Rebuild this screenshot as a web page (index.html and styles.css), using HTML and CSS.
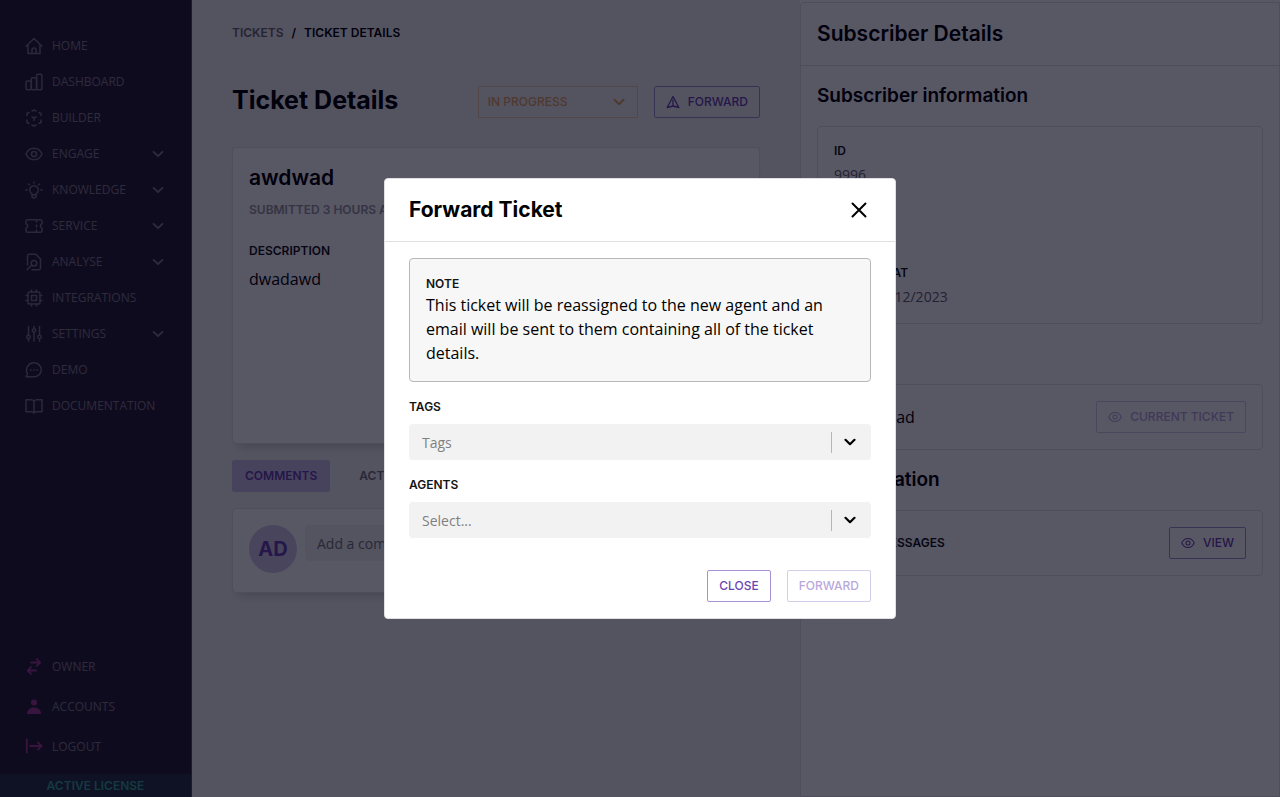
FILE: index.html
```html
<!DOCTYPE html>
<html lang="en">
<head>
<meta charset="utf-8">
<meta name="viewport" content="width=device-width, initial-scale=1">
<title>Ticket Details</title>
<link rel="stylesheet" href="styles.css">
</head>
<body>
<svg class="sprite" aria-hidden="true">
  <symbol id="chevron" viewBox="0 0 12 12"><path d="M1.500 3.800 6 8.200l4.500-4.400"/></symbol>
  <symbol id="eye" viewBox="0 0 18 18"><path d="M1 9c1.500-3.500 4.600-5.800 8-5.800S15.500 5.500 17 9c-1.500 3.500-4.600 5.800-8 5.800S2.500 12.500 1 9Z"/><circle cx="9" cy="9" r="2.600"/></symbol>
</svg>
<div class="app">
  <aside class="sidebar">
    <nav class="nav">
      <a class="nav-item" href="#"><svg class="icon" viewBox="0 0 18 18"><path d="M1 9.200 9 1.500l8 7.700M3 7.500V16.500h12V7.500M7 16.500v-3.500a2 2 0 0 1 4 0v3.500"/></svg><span>HOME</span></a>
      <a class="nav-item" href="#"><svg class="icon" viewBox="0 0 18 18"><rect x="1" y="8" width="5.300" height="8.700" rx="1.200"/><rect x="6.300" y="4.800" width="5.300" height="11.900" rx="1.200"/><rect x="11.600" y="1.200" width="5.300" height="15.500" rx="1.200"/></svg><span>DASHBOARD</span></a>
      <a class="nav-item" href="#"><svg class="icon" viewBox="0 0 18 18"><path d="M7 2 9 1l2 1M14 3.500l2 1v2M16 11v2.500l-2 1M11 16l-2 1-2-1M4 14.500l-2-1V11M2 6.500v-2l2-1M7 7.800l2 1.200 2-1.200M9 9v2.500"/></svg><span>BUILDER</span></a>
      <a class="nav-item" href="#"><svg class="icon"><use href="#eye"/></svg><span>ENGAGE</span><svg class="chevron"><use href="#chevron"/></svg></a>
      <a class="nav-item" href="#"><svg class="icon" viewBox="0 0 18 18"><path d="M7 12.800a4.300 4.300 0 1 1 4 0v2.700a1.200 1.200 0 0 1-1.200 1.200H8.200A1.200 1.200 0 0 1 7 15.500ZM7 13.800h4M9 1v1M3.500 3l.8.8M14.500 3l-.8.8M.8 9h1.400M15.800 9h1.400"/></svg><span>KNOWLEDGE</span><svg class="chevron"><use href="#chevron"/></svg></a>
      <a class="nav-item" href="#"><svg class="icon" viewBox="0 0 18 18"><path d="M2.500 2.800h13A1.500 1.500 0 0 1 17 4.300v2.500a2.300 2.300 0 0 0 0 4.400v2.500a1.500 1.500 0 0 1-1.500 1.500h-13A1.500 1.500 0 0 1 1 13.700v-2.500a2.300 2.300 0 0 0 0-4.400V4.300a1.500 1.500 0 0 1 1.500-1.500ZM11.500 3v2M11.500 8v2M11.500 13v2"/></svg><span>SERVICE</span><svg class="chevron"><use href="#chevron"/></svg></a>
      <a class="nav-item" href="#"><svg class="icon" viewBox="0 0 18 18"><path d="M2.500 12V3A1.700 1.700 0 0 1 4.200 1.200h6.500L15.500 6v9a1.700 1.700 0 0 1-1.700 1.700H7M2 16.800l4.700-4.500"/><circle cx="9" cy="10.300" r="2.800"/></svg><span>ANALYSE</span><svg class="chevron"><use href="#chevron"/></svg></a>
      <a class="nav-item" href="#"><svg class="icon" viewBox="0 0 18 18"><rect x="3" y="3" width="12" height="12" rx="1.800"/><rect x="6.500" y="6.500" width="5" height="5"/><path d="M6.500 1v2M11.500 1v2M6.500 15v2M11.500 15v2M1 6.500h2M1 11.500h2M15 6.500h2M15 11.500h2"/></svg><span>INTEGRATIONS</span></a>
      <a class="nav-item" href="#"><svg class="icon" viewBox="0 0 18 18"><circle cx="3.500" cy="12" r="1.700"/><circle cx="9" cy="5.500" r="1.700"/><circle cx="14.500" cy="12" r="1.700"/><path d="M3.500 1.500v8.800M3.500 13.700v2.500M9 1.500v2.300M9 7.200v9M14.500 1.500v8.800M14.500 13.700v2.500"/></svg><span>SETTINGS</span><svg class="chevron"><use href="#chevron"/></svg></a>
      <a class="nav-item" href="#"><svg class="icon" viewBox="0 0 18 18"><path d="M1 15.800 2.500 13C0 8.500 2.500 1.800 9.200 1.800a7 7 0 0 1 0 14ZM5.500 9h.6M8.800 9h.6M12 9h.6"/></svg><span>DEMO</span></a>
      <a class="nav-item" href="#"><svg class="icon" viewBox="0 0 18 18"><path d="M9 4.500C8.500 3.300 7.500 2.800 6 2.800H1v12h5.500c1.300 0 2.200.4 2.500 1.200.3-.8 1.200-1.200 2.500-1.200H17v-12h-5c-1.500 0-2.500.5-3 1.700ZM9 4.500V16"/></svg><span>DOCUMENTATION</span></a>
    </nav>
    <nav class="nav nav-user">
      <a class="nav-item" href="#"><svg class="icon" viewBox="0 0 18 18"><path d="M6 4.500h9M11.800 1.200l3.300 3.300-3.300 3.300M11 12.500H2.800M6 9.200l-3.300 3.300L6 15.800"/></svg><span>OWNER</span></a>
      <a class="nav-item" href="#"><svg class="icon solid" viewBox="0 0 18 18"><circle cx="9" cy="4.500" r="3"/><path d="M2 16c0-4 3-6.500 7-6.500s7 2.500 7 6.500Z"/></svg><span>ACCOUNTS</span></a>
      <a class="nav-item" href="#"><svg class="icon" viewBox="0 0 18 18"><path d="M1.800 1.500v13M5 8h11.500M13 4.500 16.500 8 13 11.500"/></svg><span>LOGOUT</span></a>
    </nav>
    <div class="license">ACTIVE LICENSE</div>
  </aside>

  <main class="main">
    <nav class="breadcrumb"><a href="#">TICKETS</a><span>/</span><span>TICKET DETAILS</span></nav>
    <div class="title-row">
      <h1>Ticket Details</h1>
      <div class="status">
        <select aria-label="Status"><option>IN PROGRESS</option></select>
        <svg class="chevron"><use href="#chevron"/></svg>
      </div>
      <button class="btn" type="button"><svg class="btn-icon" viewBox="0 0 14 14"><path d="M7 1.500 1.200 12.500 7 11l5.800 1.500ZM7 5v6"/></svg>FORWARD</button>
    </div>
    <section class="card ticket">
      <h2>awdwad</h2>
      <p class="submitted">SUBMITTED 3 HOURS AGO</p>
      <h3 class="label">DESCRIPTION</h3>
      <p class="text">dwadawd</p>
    </section>
    <div class="tabs" role="tablist">
      <button class="tab active" type="button" role="tab" aria-selected="true">COMMENTS</button>
      <button class="tab" type="button" role="tab" aria-selected="false">ACTIVITY</button>
    </div>
    <section class="card comment">
      <div class="avatar">AD</div>
      <input type="text" placeholder="Add a comment" aria-label="Add a comment">
    </section>
  </main>

  <aside class="details">
    <header class="details-head"><h2>Subscriber Details</h2></header>
    <div class="details-body">
      <h2>Subscriber information</h2>
      <dl class="box info">
        <div><dt class="label">ID</dt><dd>9996</dd></div>
        <div><dt class="label">NAME</dt><dd>User</dd></div>
        <div><dt class="label">CREATED AT</dt><dd>09:14 12/12/2023</dd></div>
      </dl>
      <h2>Tickets</h2>
      <div class="box row">
        <span class="text">awdwadad</span>
        <button class="btn muted" type="button" disabled><svg class="btn-icon"><use href="#eye"/></svg>CURRENT TICKET</button>
      </div>
      <h2>Conversation</h2>
      <div class="box row">
        <span class="label">AGENT MESSAGES</span>
        <button class="btn" type="button"><svg class="btn-icon"><use href="#eye"/></svg>VIEW</button>
      </div>
    </div>
  </aside>
</div>

<div class="overlay">
  <form class="modal" role="dialog" aria-modal="true" aria-labelledby="modal-title">
    <header class="modal-head">
      <h2 id="modal-title">Forward Ticket</h2>
      <button class="close" type="button" aria-label="Close dialog"><svg viewBox="0 0 16 16"><path d="M1.500 1.500l13 13M14.500 1.500l-13 13"/></svg></button>
    </header>
    <div class="modal-body">
      <div class="note">
        <h3 class="label">NOTE</h3>
        <p>This ticket will be reassigned to the new agent and an email will be sent to them containing all of the ticket details.</p>
      </div>
      <label class="label" for="tags">TAGS</label>
      <div class="field">
        <select id="tags"><option>Tags</option></select>
        <span class="divider"></span>
        <svg class="chevron"><use href="#chevron"/></svg>
      </div>
      <label class="label" for="agents">AGENTS</label>
      <div class="field">
        <select id="agents"><option>Select...</option></select>
        <span class="divider"></span>
        <svg class="chevron"><use href="#chevron"/></svg>
      </div>
      <div class="actions">
        <button class="btn" type="button">CLOSE</button>
        <button class="btn muted" type="submit" disabled>FORWARD</button>
      </div>
    </div>
  </form>
</div>
</body>
</html>
```
FILE: styles.css
```css
:root {
  --display: Inter, "Liberation Sans", sans-serif;
  --text: "Open Sans", "Noto Sans", sans-serif;
  --purple: #6a45b0;
  --line: #e2e0e6;
}

* { box-sizing: border-box; }

body {
  margin: 0;
  font-family: var(--text);
  color: #000;
}

h1, h2, h3, p, dl, dd { margin: 0; }
a { color: inherit; text-decoration: none; }
button, input, select { margin: 0; font: inherit; }
select { appearance: none; border: 0; background: transparent; opacity: 1; }
svg { fill: none; stroke: currentColor; stroke-linecap: round; stroke-linejoin: round; flex: none; }
.sprite { display: none; }

.app {
  display: grid;
  grid-template-columns: 192px minmax(0, 608fr) minmax(0, 480fr);
  min-height: 100vh;
}

/* Sidebar */
.sidebar {
  display: flex;
  flex-direction: column;
  padding-top: 28px;
  background: #2a2036;
  border-right: 1px solid #55505f;
}

.nav-item {
  display: flex;
  align-items: center;
  gap: 9px;
  height: 36px;
  padding: 0 27px 0 25px;
  font-size: 12px;
  line-height: 18px;
  color: #847f88;
}

.icon { width: 18px; height: 18px; stroke-width: 1.500; color: #7a7580; }
.chevron { width: 12px; height: 12px; stroke-width: 1.800; }
.nav .chevron { margin-left: auto; }
.nav-user { margin-top: auto; padding-bottom: 7px; }
.nav-user .nav-item { height: 40px; }
.nav-user .icon { color: #a03f92; stroke-width: 1.800; }
.icon.solid { fill: currentColor; stroke: none; }

.license {
  padding: 3px 0;
  background: #2a3444;
  color: #38a898;
  font: 600 12px/17px var(--display);
  text-align: center;
}

/* Ticket column */
.main {
  padding: 24px 40px;
  background: #f4f4f4;
}

.breadcrumb {
  display: flex;
  gap: 8px;
  font: 600 12px/18px var(--display);
}
.breadcrumb a { color: #6c6a70; }

.title-row {
  display: flex;
  align-items: flex-start;
  gap: 16px;
  margin: 44px 0 29px;
}

h1 { margin-right: auto; font: 700 25px/28px var(--display); }
h2 { font: 600 21px/30px var(--display); }

.btn {
  display: inline-flex;
  align-items: center;
  justify-content: center;
  gap: 8px;
  height: 32px;
  padding: 0 11px;
  border: 1px solid #a892d4;
  border-radius: 2px;
  background: transparent;
  color: var(--purple);
  font: 500 12px/18px var(--display);
  white-space: nowrap;
}
.btn-icon { width: 14px; height: 14px; stroke-width: 1.300; }
.btn.muted { color: #b9a8dc; border-color: #d6cdea; }

.status, .field {
  display: flex;
  position: relative;
  align-items: center;
}

.status {
  width: 160px;
  height: 32px;
  border: 1px solid #f0d0b4;
  color: #e5a860;
}
.status select {
  width: 100%;
  height: 100%;
  padding: 0 9px;
  color: inherit;
  font: 500 12px/18px var(--display);
}
.status .chevron { position: absolute; right: 12px; stroke-width: 2; }

.card {
  background: #fff;
  border: 1px solid var(--line);
  border-radius: 4px;
  box-shadow: 0 8px 10px -6px rgba(0, 0, 0, .2);
}

.ticket { min-height: 297px; padding: 15px 16px; }
.submitted {
  margin: 8px 0 23px;
  color: #9a97a0;
  font: 600 12px/18px var(--display);
}
.label {
  display: block;
  color: #141414;
  font: 600 12px/18px var(--display);
}
.text { font-size: 16px; line-height: 24px; }
.ticket .text { margin-top: 7px; }

.tabs { display: flex; gap: 16px; margin: 16px 0; }
.tab {
  height: 32px;
  padding: 0 13px;
  border: 0;
  border-radius: 2px;
  background: transparent;
  color: #77747e;
  font: 600 12px/18px var(--display);
}
.tab.active { background: #d0c4e8; color: var(--purple); }

.comment {
  display: flex;
  gap: 8px;
  min-height: 85px;
  padding: 16px;
}
.avatar {
  display: grid;
  place-items: center;
  width: 48px;
  height: 48px;
  flex: none;
  border-radius: 50%;
  background: #d4cae8;
  color: var(--purple);
  font: 700 20px/30px var(--display);
}
.comment input {
  flex: 1;
  min-width: 0;
  height: 36px;
  padding: 0 12px;
  border: 0;
  border-radius: 4px;
  background: #f2f2f2;
  font-size: 14px;
}
.comment input::placeholder { color: #777; }

/* Subscriber column */
.details {
  margin-top: 2px;
  background: #fff;
  border: 1px solid var(--line);
  border-radius: 4px 0 0 0;
}
.details-head {
  padding: 16px;
  border-bottom: 1px solid var(--line);
}
.details-body { padding: 15px 16px; }
.details-body > h2 { font-size: 19px; }
.box {
  margin: 15px 0;
  border: 1px solid var(--line);
  border-radius: 4px;
}
.info { display: grid; gap: 17px; padding: 15px 16px; }
.info dd { margin-top: 4px; color: #66646c; font-size: 14px; line-height: 22px; }
.row {
  display: flex;
  align-items: center;
  justify-content: space-between;
  padding: 16px;
}

/* Dialog */
.overlay {
  position: fixed;
  inset: 0;
  display: grid;
  place-items: center;
  background: rgba(1, 0, 20, .66);
}

.modal {
  width: min(512px, 100%);
  border: 1px solid #e0e0e4;
  border-radius: 4px;
  background: #fff;
}
.modal-head {
  display: flex;
  align-items: center;
  justify-content: space-between;
  padding: 16px 24px;
  border-bottom: 1px solid #e0e0e0;
}
.modal-head h2 { font-weight: 700; }
.close {
  display: grid;
  place-items: center;
  width: 24px;
  height: 24px;
  padding: 0;
  border: 0;
  background: transparent;
}
.close svg { width: 16px; height: 16px; stroke-width: 2; }

.modal-body { padding: 16px 24px; }
.note {
  margin-bottom: 16px;
  padding: 16px;
  border: 1px solid #b8b8b8;
  border-radius: 4px;
  background: #f7f7f7;
  font-size: 16px;
  line-height: 24px;
}
.field {
  height: 36px;
  margin: 8px 0 16px;
  border-radius: 4px;
  background: #f2f2f2;
}
.field select {
  width: 100%;
  height: 100%;
  padding: 0 56px 0 13px;
  color: #808080;
  font-size: 14px;
}
.field .chevron { position: absolute; right: 15px; stroke-width: 2.200; }
.divider {
  position: absolute;
  right: 39px;
  width: 1px;
  height: 21px;
  background: #b5b5bd;
}
.actions {
  display: flex;
  justify-content: flex-end;
  gap: 16px;
  margin-top: 32px;
}
```
